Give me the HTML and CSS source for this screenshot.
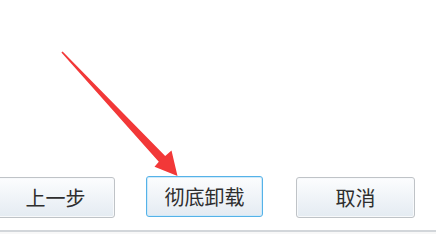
FILE: index.html
```html
<!DOCTYPE html>
<html lang="zh">
<head>
<meta charset="utf-8">
<link rel="stylesheet" href="styles.css">
</head>
<body>
<div class="page">
  <div class="content">
    <div class="buttons">
      <button class="btn btn-prev">上一步</button>
      <button class="btn btn-primary">彻底卸载</button>
      <button class="btn btn-cancel">取消</button>
    </div>
  </div>
  <div class="footer"></div>
  <svg class="arrow" width="436" height="234" viewBox="0 0 436 234">
    <polygon points="62.6,51.4 165.2,156 171.5,150.5 177.5,176 154.5,166.8 158.8,161.8 61.4,52.6" fill="#f23838"/>
  </svg>
</div>
</body>
</html>
```
FILE: styles.css
```css
html, body {
  margin: 0;
  padding: 0;
  background: #ffffff;
}
.page {
  position: relative;
  width: 436px;
  height: 234px;
  overflow: hidden;
  font-family: "Noto Sans CJK SC", "Noto Sans", sans-serif;
}
.content {
  height: 230px;
  box-sizing: border-box;
  padding-top: 176px;
}
.buttons {
  display: flex;
  margin-left: -4px;
}
.btn {
  height: 41px;
  box-sizing: border-box;
  border: 1px solid #bfc3c7;
  border-radius: 3px;
  background: linear-gradient(#fcfdfe, #e4ebf2);
  box-shadow: inset 0 0 0 1px #f7f9fb;
  font-family: "Noto Sans CJK SC", "Noto Sans", sans-serif;
  font-size: 20px;
  color: #2e2e2e;
  padding: 0;
  line-height: 1;
}
.btn-prev {
  width: 119px;
  margin-top: 1px;
}
.btn-primary {
  width: 117px;
  margin-left: 31px;
  border-color: #55b2e8;
  box-shadow: inset 0 0 0 1px #cfeafa;
}
.btn-cancel {
  width: 119px;
  margin-left: 33px;
  margin-top: 1px;
}
.footer {
  height: 4px;
  border-top: 2px solid #d2d6da;
  box-sizing: border-box;
  background: #f8f8f8;
}
.arrow {
  position: absolute;
  left: 0;
  top: 0;
}
```
